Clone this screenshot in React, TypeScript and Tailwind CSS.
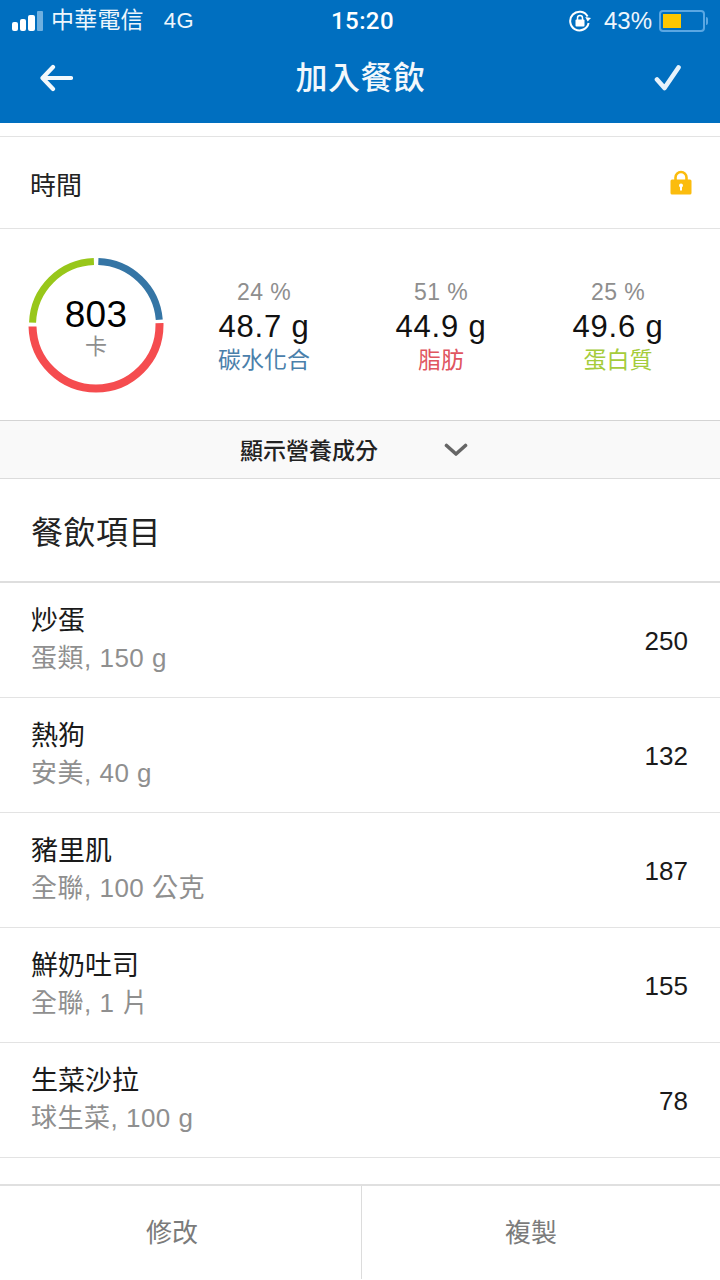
const font = { fontFamily: '"Liberation Sans", "Noto Sans CJK TC", sans-serif' };

function Ring() {
  const r = 63.5;
  const c = 2 * Math.PI * r;
  const segs = [
    { color: "#3575a5", start: 0.006, len: 0.23, w: 7 },
    { color: "#f54c4f", start: 0.245, len: 0.5, w: 8 },
    { color: "#98c71a", start: 0.755, len: 0.238, w: 7 },
  ];
  return (
    <svg width="136" height="136" viewBox="0 0 136 136" className="block">
      {segs.map((s) => (
        <circle
          key={s.color}
          cx="68"
          cy="68"
          r={r}
          fill="none"
          stroke={s.color}
          strokeWidth={s.w}
          strokeDasharray={`${s.len * c} ${c}`}
          strokeDashoffset={-s.start * c}
          transform="rotate(-90 68 68)"
        />
      ))}
    </svg>
  );
}

function Macro({ pct, g, label, color }: { pct: string; g: string; label: string; color: string }) {
  return (
    <div className="flex w-[120px] flex-col items-center">
      <div className="h-[25px] text-[23px] leading-[25px] tracking-[0.4px] text-[#8e8e8e]">{pct}</div>
      <div className="mt-[5px] h-[34px] text-[31px] leading-[34px] tracking-[0.8px] text-[#111]">{g}</div>
      <div className={`mt-[1px] h-[30px] text-[23px] leading-[30px] ${color}`}>{label}</div>
    </div>
  );
}

function Food({ name, sub, cal }: { name: string; sub: string; cal: string }) {
  return (
    <div className="flex h-[115px] items-center justify-between border-b border-[#e3e3e3] pl-[31px] pr-[32px]">
      <div className="mb-[2px]">
        <div className="h-[38px] text-[27px] leading-[38px] text-[#1a1a1a]">{name}</div>
        <div className="h-[36px] text-[26px] leading-[36px] tracking-[0.5px] text-[#8f8f8f]">{sub}</div>
      </div>
      <div className="mt-[2px] text-[26px] text-[#1a1a1a]">{cal}</div>
    </div>
  );
}

export default function App() {
  return (
    <div style={font} className="flex h-[1280px] w-[720px] flex-col overflow-hidden bg-white">
      <div className="h-[123px] bg-[#006fc0] text-white">
        <div className="flex h-[41px] items-center justify-between pl-[12px] pr-[12px]">
          <div className="flex w-[269px] items-center">
            <div className="flex items-end gap-[2px]">
              <div className="h-[9px] w-[6px] rounded-[2px] bg-white" />
              <div className="h-[12px] w-[6px] rounded-[2px] bg-white" />
              <div className="h-[16px] w-[7px] rounded-[2px] bg-white" />
              <div className="h-[20px] w-[6px] rounded-[1px] bg-[#6fb0e0]" />
            </div>
            <span className="ml-[8px] text-[23px] leading-none tracking-[0.2px] text-[#eef6fc]">中華電信</span>
            <span className="ml-[20px] text-[22px] leading-none tracking-[0.5px] text-[#eef6fc]">4G</span>
          </div>
          <div className="text-[24px] font-medium leading-none tracking-[0.4px]" style={{ fontFamily: "Roboto, sans-serif" }}>15:20</div>
          <div className="flex w-[264px] items-center justify-end">
            <svg width="22" height="22" viewBox="0 0 22 22" fill="none" className="block">
              <path d="M18.6 6.5A9.3 9.3 0 1 0 19.6 13" stroke="#fff" strokeWidth="2" />
              <path d="M16 7.5h6l-3 4z" fill="#fff" transform="rotate(8 19 9)" />
              <rect x="6.5" y="9.5" width="9" height="7" rx="1" fill="#fff" />
              <path d="M8.5 10V8a2.5 2.5 0 0 1 5 0v2" stroke="#fff" strokeWidth="1.5" />
            </svg>
            <span className="ml-[13px] text-[24px] leading-none text-[#eef6fc]">43%</span>
            <div className="ml-[7px] flex h-[22px] w-[46px] items-center rounded-[4px] border-2 border-[#5aa7e3] p-[2px]">
              <div className="h-[14px] w-[18px] bg-[#fdc700]" />
            </div>
            <div className="ml-[1px] h-[8px] w-[2px] rounded-r-[2px] bg-[#5aa7e3]" />
          </div>
        </div>
        <div className="flex h-[74px] items-center justify-between pl-[39px] pr-[38px]">
          <div className="w-[60px]">
            <svg width="34" height="30" viewBox="0 0 34 30" fill="none" className="block">
              <path d="M14 4 3.5 15 14 26M4 15h28" stroke="#f2f8fc" strokeWidth="4.2" strokeLinecap="round" strokeLinejoin="round" />
            </svg>
          </div>
          <div className="text-[32px] font-medium leading-none tracking-[0.5px] text-[#f2f8fc]">加入餐飲</div>
          <div className="flex w-[60px] justify-end">
            <svg width="28" height="28" viewBox="0 0 28 28" fill="none" className="block">
              <path d="M3 15.5 10.5 24 24.5 3.5" stroke="#e6f2fb" strokeWidth="4.6" strokeLinecap="round" strokeLinejoin="round" />
            </svg>
          </div>
        </div>
      </div>

      <div className="h-[14px] border-b border-[#e3e3e3]" />

      <div className="flex h-[92px] items-center justify-between border-b border-[#e3e3e3] pl-[30px] pr-[28px]">
        <div className="mt-[8px] text-[26px] text-[#222]">時間</div>
        <svg width="22" height="26" viewBox="0 0 22 26" fill="none" className="block">
          <path d="M5.5 12V7.5a5.5 5.5 0 0 1 11 0V12" stroke="#fbbc0d" strokeWidth="2.6" />
          <rect x="0.5" y="9.5" width="21" height="15" rx="1.5" fill="#fbbc0d" />
          <circle cx="11" cy="15.5" r="2" fill="#fff" />
          <rect x="10" y="15.5" width="2" height="5" fill="#fff" />
        </svg>
      </div>

      <div className="flex h-[192px] items-center border-b border-[#d4d4d4] pl-[28px]">
        <div className="relative h-[136px] w-[136px]">
          <Ring />
          <div className="absolute inset-0 flex flex-col items-center pt-[38px]">
            <div className="text-[37px] leading-[40px] tracking-[0.2px] text-black">803</div>
            <div className="-mt-[2px] text-[22px] leading-[28px] text-[#8e8e8e]">卡</div>
          </div>
        </div>
        <div className="ml-[40px] flex w-[474px] gap-[57px] pt-[6px]">
          <Macro pct="24 %" g="48.7 g" label="碳水化合" color="text-[#4a80ab]" />
          <Macro pct="51 %" g="44.9 g" label="脂肪" color="text-[#e0555f]" />
          <Macro pct="25 %" g="49.6 g" label="蛋白質" color="text-[#a5cc3b]" />
        </div>
      </div>

      <div className="flex h-[58px] items-center border-b border-[#dcdcdc] bg-[#f9f9f9] pl-[240px]">
        <div className="mt-[3px] text-[23px] font-medium leading-none text-[#222]">顯示營養成分</div>
        <svg width="24" height="14" viewBox="0 0 24 14" fill="none" className="ml-[66px] mt-[1px] block">
          <path d="M2.5 2.5 12 11 21.5 2.5" stroke="#666" strokeWidth="3.6" strokeLinecap="round" strokeLinejoin="round" />
        </svg>
      </div>

      <div className="flex h-[104px] items-center border-b-2 border-[#dedede] pl-[31px]">
        <div className="mt-[6px] text-[32px] leading-none tracking-[0.5px] text-[#222]">餐飲項目</div>
      </div>

      <Food name="炒蛋" sub="蛋類, 150 g" cal="250" />
      <Food name="熱狗" sub="安美, 40 g" cal="132" />
      <Food name="豬里肌" sub="全聯, 100 公克" cal="187" />
      <Food name="鮮奶吐司" sub="全聯, 1 片" cal="155" />
      <Food name="生菜沙拉" sub="球生菜, 100 g" cal="78" />

      <div className="h-[26px]" />

      <div className="flex h-[95px] border-t-2 border-[#e0e0e0]">
        <div className="flex w-[362px] items-center justify-center border-r border-[#dcdcdc] pr-[17px] pt-[2px] text-[26px] text-[#7b7b7b]">修改</div>
        <div className="flex flex-1 items-center justify-center pr-[20px] pt-[2px] text-[26px] text-[#7b7b7b]">複製</div>
      </div>
    </div>
  );
}
